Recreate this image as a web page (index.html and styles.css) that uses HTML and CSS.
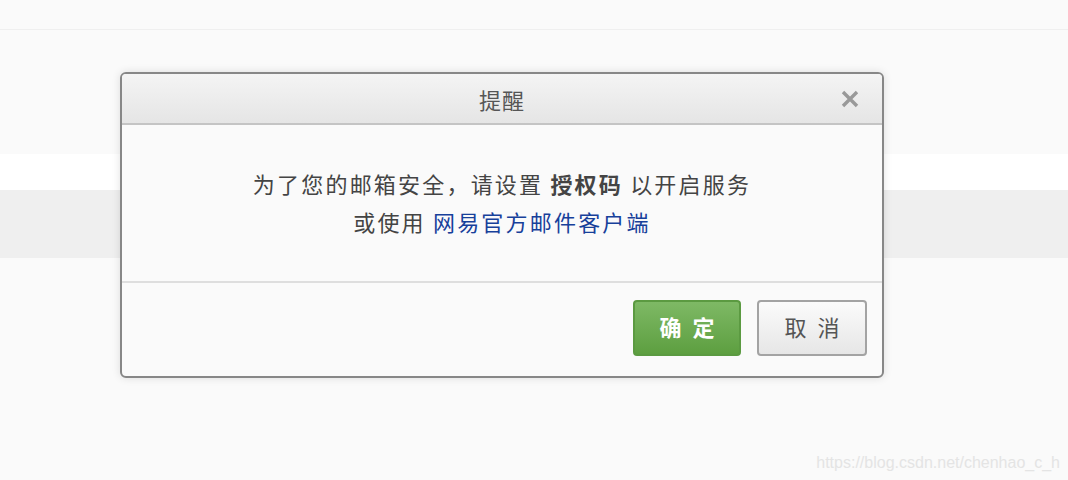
FILE: index.html
```html
<!DOCTYPE html>
<html lang="zh-CN">
  <head>
    <title>提醒</title>
    <meta charset="UTF-8" />
    <meta name="viewport" content="width=device-width" />
    <link rel="stylesheet" href="styles.css">
  </head>
  <body>
    <div class="topbar"></div>
    <div class="page">
      <div class="band band-white"></div>
      <div class="band band-grey"></div>
    </div>

    <div class="dialog" role="dialog" aria-labelledby="dialogTitle">
      <div class="dialog-head">
        <h2 id="dialogTitle">提醒</h2>
        <button class="close" aria-label="关闭">
          <svg width="20" height="20" viewBox="0 0 20 20">
            <path d="M3 3 L17 17 M17 3 L3 17" stroke="#999" stroke-width="3.4" stroke-linecap="butt" fill="none" />
          </svg>
        </button>
      </div>
      <div class="dialog-body">
        <p>为了您的邮箱安全，请设置 <b>授权码</b> 以开启服务</p>
        <p>或使用 <a href="#">网易官方邮件客户端</a></p>
      </div>
      <div class="dialog-foot">
        <button class="btn btn-ok">确 定</button>
        <button class="btn btn-cancel">取 消</button>
      </div>
    </div>

    <div class="watermark">https://blog.csdn.net/chenhao_c_h</div>
  </body>
</html>
```

FILE: styles.css
```css
* {
  box-sizing: border-box;
}

body {
  margin: 0;
  height: 480px;
  overflow: hidden;
  font-family: "Noto Sans CJK SC", "Noto Sans", sans-serif;
  color: #444;
  background-color: #fafafa;
}

.topbar {
  height: 30px;
  border-bottom: solid 1px #efefef;
}

.page {
  padding-top: 124px;
}

.band {
  width: 100%;
}

.band-white {
  height: 36px;
  background-color: #fff;
}

.band-grey {
  height: 68px;
  background-color: #efefef;
}

.dialog {
  position: absolute;
  left: 120px;
  top: 72px;
  width: 764px;
  height: 306px;
  border: solid 2px #878787;
  border-radius: 6px;
  background-color: #fafafa;
  box-shadow: 0 0 8px rgba(0, 0, 0, 0.12);
  display: flex;
  flex-direction: column;
  overflow: hidden;
}

.dialog-head {
  position: relative;
  height: 51px;
  border-bottom: solid 2px #c4c4c4;
  background: linear-gradient(#f4f4f4, #e5e5e5);
  display: flex;
  align-items: center;
  justify-content: center;
}

.dialog-head h2 {
  margin: 0;
  font-size: 22px;
  font-weight: normal;
  color: #555;
  letter-spacing: 1px;
}

.close {
  position: absolute;
  right: 22px;
  top: 15px;
  padding: 0;
  border: none;
  background: none;
  width: 20px;
  height: 20px;
  cursor: pointer;
}

.close svg {
  display: block;
}

.dialog-body {
  height: 158px;
  padding-top: 39px;
  border-bottom: solid 2px #dedede;
  text-align: center;
  font-size: 22px;
  letter-spacing: 2.2px;
  line-height: 38px;
}

.dialog-body p {
  margin: 0;
}

.dialog-body b {
  color: #444;
}

.dialog-body a {
  color: #17409a;
  text-decoration: none;
}

.dialog-foot {
  flex: 1;
  display: flex;
  justify-content: flex-end;
  align-items: flex-start;
  gap: 16px;
  padding: 17px 15px 0 0;
}

.btn {
  height: 56px;
  border-radius: 4px;
  font-family: inherit;
  font-size: 22px;
  letter-spacing: 3px;
  padding: 0 0 4px 3px;
  cursor: pointer;
}

.btn-ok {
  width: 108px;
  border: solid 2px #5b9a41;
  background: linear-gradient(#7eb965, #5d9f40);
  color: #fff;
  font-weight: bold;
}

.btn-cancel {
  width: 110px;
  border: solid 2px #a3a3a3;
  background: linear-gradient(#fbfbfb, #e6e6e6);
  color: #555;
}

.watermark {
  position: absolute;
  right: 8px;
  bottom: 8px;
  font-family: "Liberation Sans", Arial, sans-serif;
  font-size: 16px;
  color: #e4e4e4;
}
```
